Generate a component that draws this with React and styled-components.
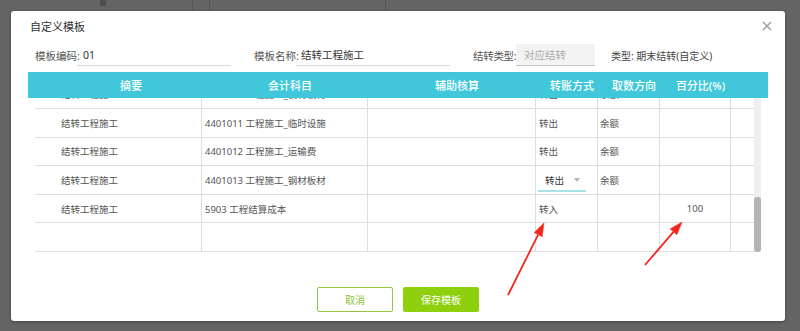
import React from 'react';
import styled, { createGlobalStyle } from 'styled-components';

const GlobalStyle = createGlobalStyle`
  html, body {
    margin: 0;
    padding: 0;
    background: #646464;
  }
  body {
    font-family: "Noto Sans", "Noto Sans CJK SC", sans-serif;
  }
`;

const COLS = '167px 166px 168px 62px 62px 71px 23px';

const Page = styled.div`
  width: 800px;
  height: 331px;
  overflow: hidden;
  background: #646464;
  display: flex;
  flex-direction: column;
`;

const BehindStrip = styled.div`
  height: 11px;
  flex: none;
  background:
    linear-gradient(#4e4e4e, #4e4e4e) 100px 0 / 6px 6px no-repeat,
    linear-gradient(#575757, #575757) 192px 0 / 1px 11px no-repeat,
    linear-gradient(#575757, #575757) 209px 0 / 1px 11px no-repeat,
    linear-gradient(#575757, #575757) 385px 0 / 1px 11px no-repeat;
`;

const Modal = styled.div`
  position: relative;
  margin-left: 11px;
  width: 774px;
  height: 310px;
  background: #fff;
  border-radius: 3px;
  box-shadow: 0 1px 3px rgba(0, 0, 0, 0.35);
  display: flex;
  flex-direction: column;
`;

const TitleBar = styled.div`
  height: 30px;
  padding: 0 13px 0 19px;
  display: flex;
  align-items: center;
  justify-content: space-between;
`;

const Title = styled.span`
  font-size: 11px;
  color: #333;
`;

const Close = styled.button`
  border: 0;
  background: none;
  padding: 0;
  width: 10px;
  height: 10px;
  display: flex;
  cursor: pointer;
`;

const FormRow = styled.div`
  margin-top: 3px;
  height: 22px;
  padding-left: 24px;
  display: flex;
  align-items: center;
  gap: 23px;
`;

const Field = styled.div`
  display: flex;
  align-items: center;
`;

const Label = styled.span`
  width: ${p => p.$w || 42}px;
  white-space: nowrap;
  font-size: 10.5px;
  letter-spacing: ${p => p.$tight ? '-0.3px' : '0'};
  color: #555;
`;

const Input = styled.div`
  width: ${p => p.$w}px;
  height: 22px;
  box-sizing: border-box;
  padding-left: ${p => p.$pl || 6}px;
  display: flex;
  align-items: center;
  font-size: 10.5px;
  color: ${p => (p.$placeholder ? '#aaa' : '#333')};
  background: ${p => (p.$filled ? '#f3f3f3' : 'transparent')};
  border-bottom: 1px solid ${p => (p.$filled ? '#c9c4cc' : '#dcd8de')};
`;

const TypeText = styled.span`
  margin-left: -7px;
  font-size: 10px;
  color: #444;
`;

const HeaderRow = styled.div`
  margin: 6px 17px 0;
  height: 26px;
  background: #40c8da;
  display: grid;
  grid-template-columns: ${COLS};
  padding-left: 12px;
`;

const HeadCell = styled.div`
  display: flex;
  align-items: center;
  justify-content: center;
  padding-left: ${p => p.$pl || 0}px;
  font-size: 11px;
  font-weight: 500;
  color: #fff;
  white-space: nowrap;
`;

const BodyWrap = styled.div`
  margin: 0 24px;
  height: 154px;
  display: flex;
  overflow: hidden;
`;

const Rows = styled.div`
  flex: 1;
  overflow: hidden;
`;

const RowsInner = styled.div`
  margin-top: -17.6px;
`;

const Row = styled.div`
  display: grid;
  grid-template-columns: ${COLS};
  height: 28.6px;
  box-sizing: border-box;
  border-bottom: 1px solid #dedede;
`;

const Cell = styled.div`
  display: flex;
  align-items: center;
  justify-content: ${p => (p.$center ? 'center' : 'flex-start')};
  padding-left: ${p => p.$pl || 0}px;
  border-right: ${p => (p.$last ? 'none' : '1px solid #dedede')};
  font-size: 9.5px;
  color: #555;
  white-space: nowrap;
  overflow: hidden;
`;

const Select = styled.div`
  margin-left: 2px;
  width: 48px;
  height: 21px;
  margin-top: 3px;
  box-sizing: border-box;
  padding: 0 6px 0 7px;
  display: flex;
  align-items: center;
  justify-content: space-between;
  border-bottom: 2px solid #a9e3e8;
  font-size: 9.5px;
  color: #333;
`;

const Caret = styled.span`
  width: 0;
  height: 0;
  border-left: 3px solid transparent;
  border-right: 3px solid transparent;
  border-top: 4px solid #b5b5b5;
`;

const Track = styled.div`
  width: 7px;
  background: #efefef;
  display: flex;
  flex-direction: column;
  justify-content: flex-end;
`;

const Thumb = styled.div`
  height: 55px;
  background: #b4b4b4;
  border-radius: 3px;
`;

const Footer = styled.div`
  margin-top: 35px;
  display: flex;
  justify-content: center;
  gap: 10px;
`;

const Button = styled.button`
  width: 76px;
  height: 25px;
  border-radius: 2px;
  border: 1px solid ${p => (p.$primary ? '#8ecf0e' : '#93c443')};
  background: ${p => (p.$primary ? '#8ecf0e' : '#fff')};
  color: ${p => (p.$primary ? '#fff' : '#8cc43a')};
  font-family: inherit;
  font-size: 10px;
  padding: 0;
  cursor: pointer;
`;

const Overlay = styled.svg`
  position: absolute;
  left: 0;
  top: 0;
  width: 774px;
  height: 310px;
  pointer-events: none;
`;

const rows = [
  { summary: '结转工程施工', account: '4401010 工程施工_钢材板材', way: '转出', dir: '余额' },
  { summary: '结转工程施工', account: '4401011 工程施工_临时设施', way: '转出', dir: '余额' },
  { summary: '结转工程施工', account: '4401012 工程施工_运输费', way: '转出', dir: '余额' },
  { summary: '结转工程施工', account: '4401013 工程施工_钢材板材', way: '转出', dir: '余额', select: true },
  { summary: '结转工程施工', account: '5903 工程结算成本', way: '转入', dir: '', pct: '100' },
  { summary: '', account: '', way: '', dir: '' },
];

function Arrow({ x1, y1, x2, y2 }) {
  const dx = x2 - x1;
  const dy = y2 - y1;
  const len = Math.hypot(dx, dy);
  const ux = dx / len;
  const uy = dy / len;
  const bx = x2 - ux * 13;
  const by = y2 - uy * 13;
  const px = -uy * 4.5;
  const py = ux * 4.5;
  return (
    <g fill="#f3261b" stroke="#f3261b">
      <line x1={x1} y1={y1} x2={bx} y2={by} strokeWidth="1.8" />
      <polygon points={`${x2},${y2} ${bx + px},${by + py} ${bx - px},${by - py}`} strokeWidth="0.5" />
    </g>
  );
}

export default function App() {
  return (
    <Page>
      <GlobalStyle />
      <BehindStrip />
      <Modal>
        <TitleBar>
          <Title>自定义模板</Title>
          <Close>
            <svg width="10" height="10" viewBox="0 0 10 10">
              <path d="M1 1 L9 9 M9 1 L1 9" stroke="#9a9a9a" strokeWidth="1.4" />
            </svg>
          </Close>
        </TitleBar>

        <FormRow>
          <Field>
            <Label>模板编码:</Label>
            <Input $w={154}>01</Input>
          </Field>
          <Field>
            <Label>模板名称:</Label>
            <Input $w={154} $pl={5}>结转工程施工</Input>
          </Field>
          <Field>
            <Label $w={43} $tight>结转类型:</Label>
            <Input $w={79} $pl={8} $filled $placeholder>对应结转</Input>
          </Field>
          <TypeText>类型: 期末结转(自定义)</TypeText>
        </FormRow>

        <HeaderRow>
          <HeadCell $pl={15}>摘要</HeadCell>
          <HeadCell>会计科目</HeadCell>
          <HeadCell>辅助核算</HeadCell>
          <HeadCell>转账方式</HeadCell>
          <HeadCell>取数方向</HeadCell>
          <HeadCell>百分比(%)</HeadCell>
          <HeadCell />
        </HeaderRow>

        <BodyWrap>
          <Rows>
            <RowsInner>
              {rows.map((r, i) => (
                <Row key={i}>
                  <Cell $pl={26}>{r.summary}</Cell>
                  <Cell $pl={3}>{r.account}</Cell>
                  <Cell />
                  <Cell $pl={r.select ? 0 : 3}>
                    {r.select ? (
                      <Select>
                        {r.way}
                        <Caret />
                      </Select>
                    ) : (
                      r.way
                    )}
                  </Cell>
                  <Cell $pl={2}>{r.dir}</Cell>
                  <Cell $center>{r.pct}</Cell>
                  <Cell $last />
                </Row>
              ))}
            </RowsInner>
          </Rows>
          <Track>
            <Thumb />
          </Track>
        </BodyWrap>

        <Footer>
          <Button>取消</Button>
          <Button $primary>保存模板</Button>
        </Footer>

        <Overlay viewBox="0 0 774 310">
          <Arrow x1={497} y1={284} x2={533} y2={212} />
          <Arrow x1={634} y1={254} x2={671} y2={211} />
        </Overlay>
      </Modal>
    </Page>
  );
}
